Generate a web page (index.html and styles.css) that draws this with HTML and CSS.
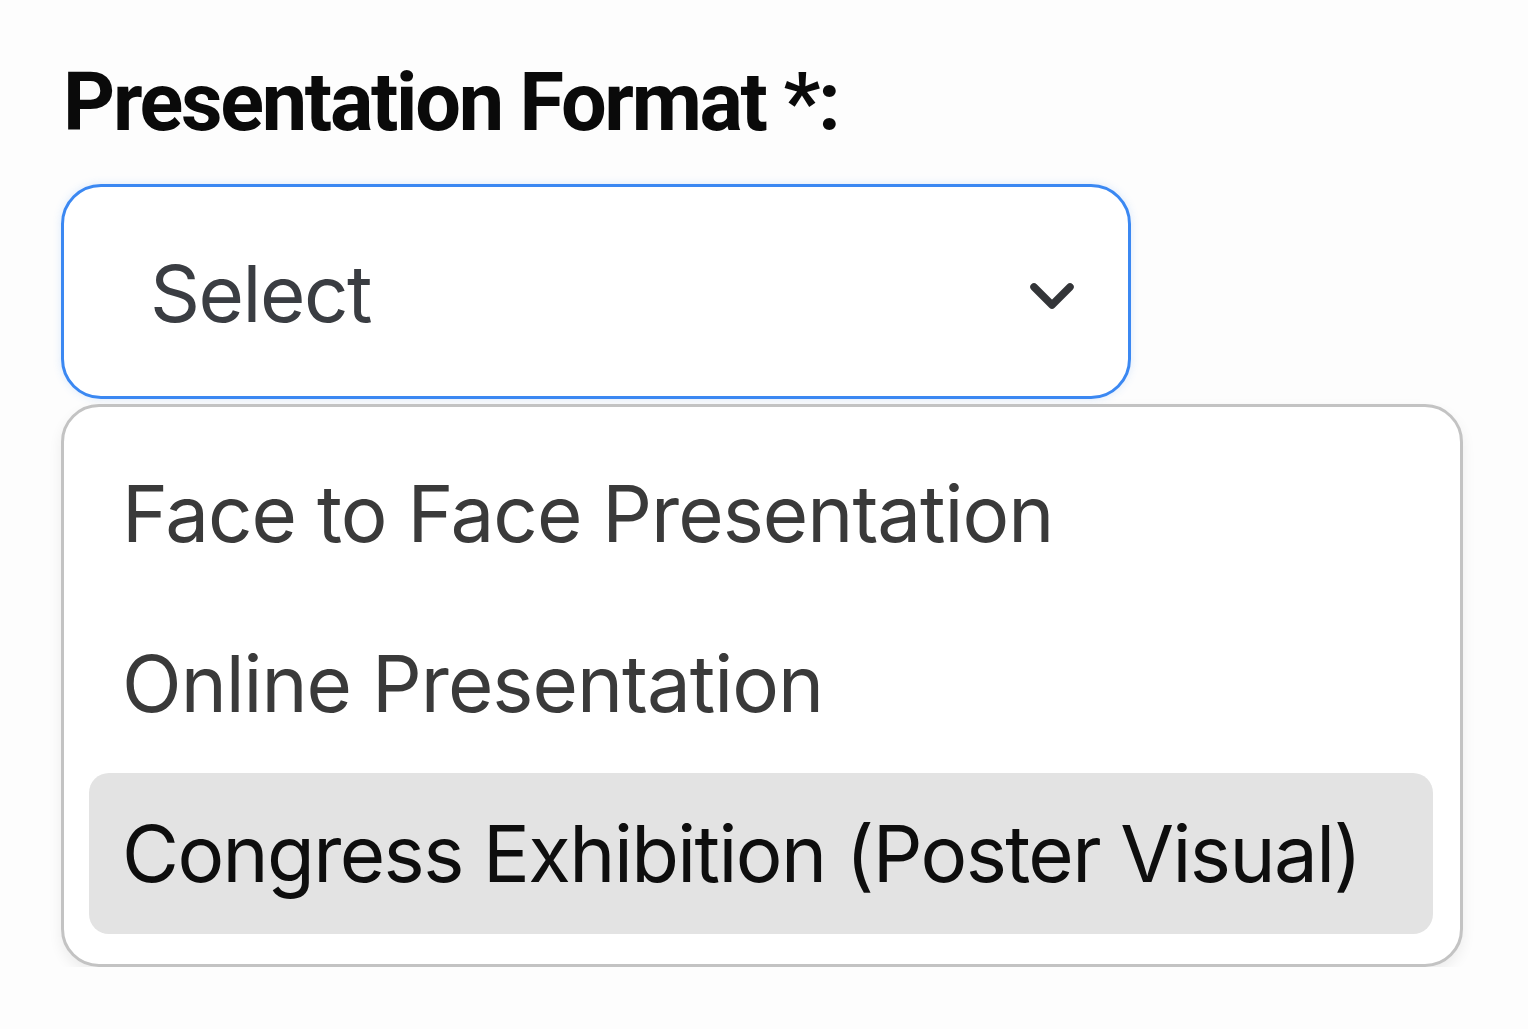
FILE: index.html
```
<!DOCTYPE html>
<html lang="en">
<head>
<meta charset="utf-8">
<title>Presentation Format</title>
<link rel="stylesheet" href="styles.css">
</head>
<body>
<div class="field">
  <label class="label">Presentation Format *:</label>
  <div class="select">
    <span class="select-text">Select</span>
    <svg class="chevron" width="46" height="32" viewBox="0 0 46 32"><polyline points="5,6 23,24 41,6" fill="none" stroke="#333538" stroke-width="7.5" stroke-linecap="round" stroke-linejoin="round"/></svg>
  </div>
  <ul class="menu">
    <li class="option">Face to Face Presentation</li>
    <li class="option">Online Presentation</li>
    <li class="option active">Congress Exhibition (Poster Visual)</li>
  </ul>
</div>
</body>
</html>
```
FILE: styles.css
```
html, body {
  margin: 0;
  padding: 0;
  background: #fdfdfd;
}
body {
  font-family: Inter, "Noto Sans", sans-serif;
}
.field {
  padding: 58px 0 0 61px;
  display: flex;
  flex-direction: column;
  align-items: flex-start;
}
.label {
  font-family: Roboto, Inter, sans-serif;
  font-size: 81px;
  font-weight: 700;
  line-height: 90px;
  color: #0a0a0a;
  margin-left: 2px;
  letter-spacing: -2.3px;
}
.select {
  margin-top: 36px;
  box-sizing: border-box;
  width: 1070px;
  height: 215px;
  border: 3.5px solid #3b88f2;
  border-radius: 40px;
  background: #fff;
  box-shadow: 0 0 8px rgba(59, 136, 242, 0.18);
  display: flex;
  align-items: center;
  justify-content: space-between;
  padding: 4px 53px 0 86px;
}
.select-text {
  font-size: 78px;
  color: #3a3d42;
  line-height: 1;
  letter-spacing: -1.5px;
}
.chevron {
  display: block;
  margin-top: 6px;
}
.menu {
  list-style: none;
  margin: 5px 0 0 0;
  box-sizing: border-box;
  width: 1402px;
  height: 563px;
  border: 3px solid #c3c3c3;
  border-radius: 38px;
  background: #fff;
  box-shadow: 0 6px 14px rgba(0, 0, 0, 0.07);
  padding: 26px 27px 0 25px;
  display: flex;
  flex-direction: column;
  gap: 9px;
}
.option {
  height: 161px;
  display: flex;
  align-items: center;
  padding-left: 33px;
  font-size: 78px;
  color: #3a3a3a;
  border-radius: 20px;
  letter-spacing: -1px;
}
.option.active {
  background: #e3e3e3;
  color: #0e0e0e;
  letter-spacing: -1.6px;
}
```
